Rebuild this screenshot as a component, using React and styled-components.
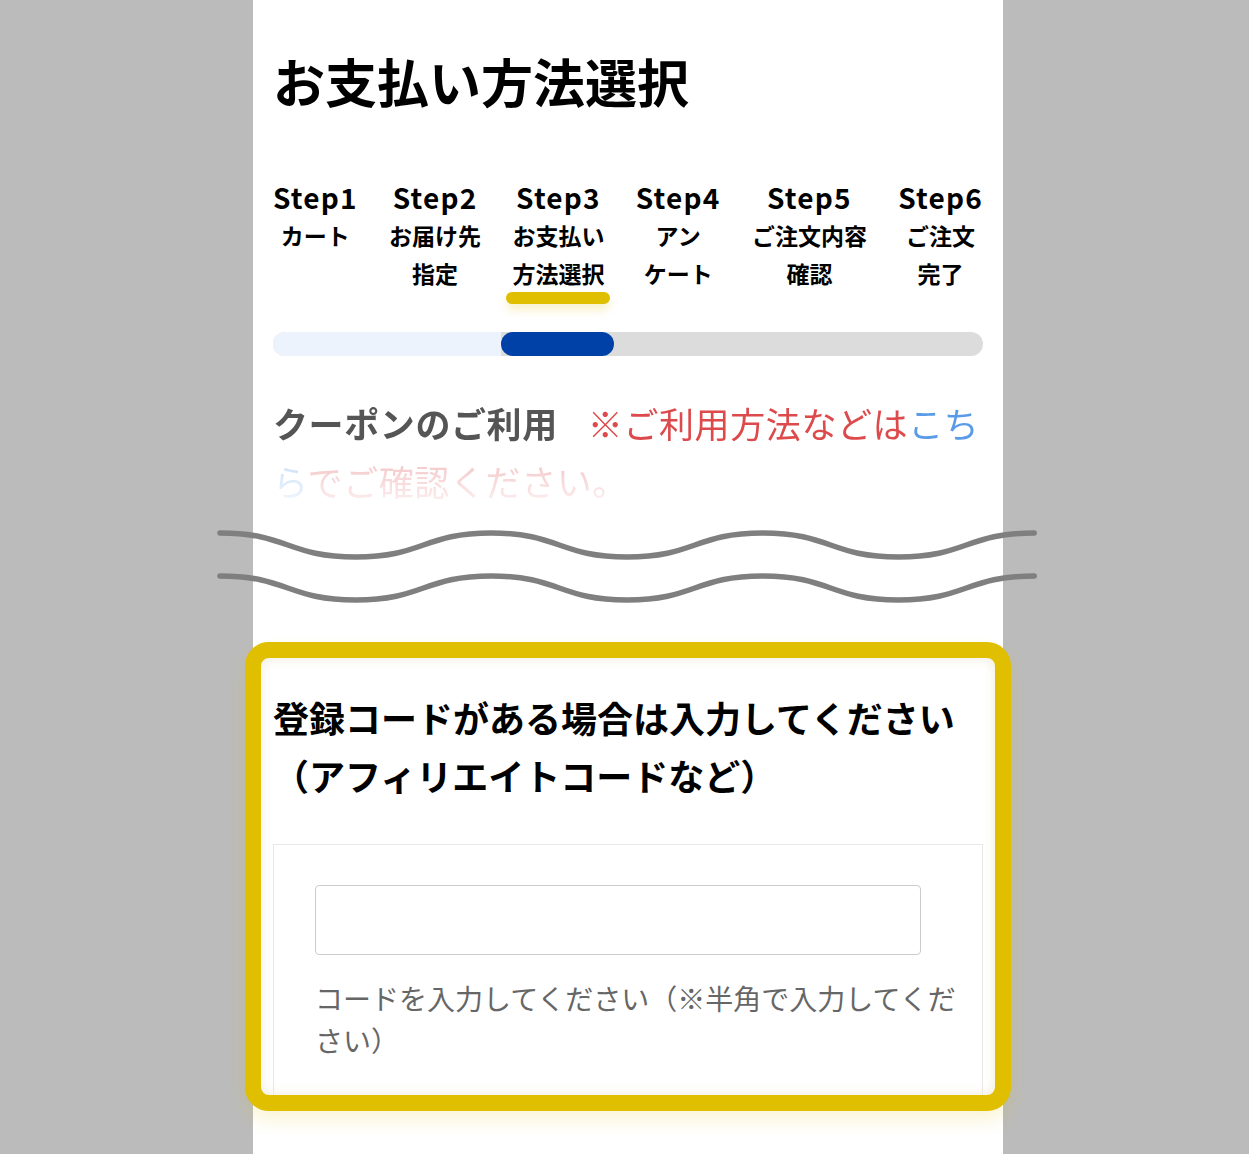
import React from 'react';
import styled, { createGlobalStyle } from 'styled-components';

const GlobalStyle = createGlobalStyle`
  html, body { margin: 0; padding: 0; background: #bbbbbb; }
  body { font-family: "Noto Sans CJK JP", "Noto Sans", sans-serif; color: #000; }
  * { box-sizing: border-box; }
`;

const Column = styled.main`
  width: 750px;
  min-height: 1154px;
  margin-left: 253px;
  background: #fff;
  padding: 45px 20px 42px;
`;

const Title = styled.h1`
  margin: 0;
  font-size: 52px;
  line-height: 72px;
  font-weight: 700;
`;

const Steps = styled.ol`
  list-style: none;
  margin: 61px 0 0;
  padding: 0;
  display: flex;
  justify-content: space-between;
`;

const Step = styled.li`
  display: flex;
  flex-direction: column;
  text-align: center;
`;

const StepLabel = styled.span`
  font-size: 28px;
  line-height: 38px;
  font-weight: 700;
  letter-spacing: 1.2px;
`;

const StepSub = styled.span`
  font-size: 23px;
  line-height: 38px;
  font-weight: 700;
  white-space: pre-line;
`;

const StepMark = styled.span`
  display: block;
  height: 12px;
  margin: 0 -6px;
  border-radius: 6px;
  background: #e0be00;
  box-shadow: 0 6px 10px rgba(224, 190, 0, 0.22);
`;

const Track = styled.div`
  margin-top: 28px;
  height: 24px;
  border-radius: 12px;
  background: #dcdcdc;
  display: flex;
  overflow: hidden;
`;

const TrackDone = styled.div`
  background: #edf3fd;
`;

const TrackCurrent = styled.div`
  background: #0041a8;
  border-radius: 12px;
`;

const Coupon = styled.p`
  margin: 38px 0 0;
  font-size: 35px;
  line-height: 58px;
  letter-spacing: 0.6px;
  -webkit-mask-image: linear-gradient(to bottom, #000 0, #000 50%, rgba(0,0,0,0.3) 60%, rgba(0,0,0,0.08) 95%);
  mask-image: linear-gradient(to bottom, #000 0, #000 50%, rgba(0,0,0,0.3) 60%, rgba(0,0,0,0.08) 95%);
`;

const CouponTitle = styled.span`
  color: #555;
  font-weight: 700;
  margin-right: 30px;
`;

const CouponNote = styled.span`
  color: #dd4a4c;
`;

const CouponLink = styled.a`
  color: #5a9be8;
  text-decoration: none;
`;

const Wave = styled.svg`
  display: block;
  margin: 15px 0 0 -56px;
`;

const Frame = styled.section`
  margin: 35px -28px 0;
  border: 16px solid #e0be00;
  border-radius: 24px;
  padding: 30px 12px 0;
  overflow: hidden;
  background: #fff;
  box-shadow: inset 0 0 12px rgba(170, 140, 40, 0.18), 0 10px 18px rgba(224, 190, 0, 0.16);
`;

const FrameHeading = styled.h2`
  margin: 0;
  font-size: 36px;
  line-height: 58px;
  font-weight: 700;
`;

const CodeBox = styled.div`
  margin-top: 40px;
  border: 1px solid #e8e8e8;
  border-bottom: none;
  padding: 40px 16px 34px 41px;
`;

const CodeInput = styled.input`
  display: block;
  width: 606px;
  height: 70px;
  border: 1px solid #cccccc;
  border-radius: 4px;
  background: #fff;
  font-size: 24px;
  padding: 0 16px;
`;

const Help = styled.p`
  margin: 22px 0 0;
  font-size: 28px;
  line-height: 42px;
  color: #666;
`;

const steps = [
  { label: 'Step1', sub: 'カート' },
  { label: 'Step2', sub: 'お届け先\n指定' },
  { label: 'Step3', sub: 'お支払い\n方法選択', current: true },
  { label: 'Step4', sub: 'アン\nケート' },
  { label: 'Step5', sub: 'ご注文内容\n確認' },
  { label: 'Step6', sub: 'ご注文\n完了' },
];

function wavePath(y0, amp) {
  const hp = 135.7;
  const x0 = 3;
  let d = `M${x0},${y0}`;
  for (let i = 0; i < 6; i++) {
    const xs = x0 + i * hp;
    const xe = xs + hp;
    const ys = i % 2 === 0 ? y0 : y0 + amp;
    const ye = i % 2 === 0 ? y0 + amp : y0;
    d += ` C${(xs + hp * 0.5).toFixed(1)},${ys} ${(xe - hp * 0.5).toFixed(1)},${ye} ${xe.toFixed(1)},${ye}`;
  }
  return d;
}

export default function App() {
  return (
    <>
      <GlobalStyle />
      <Column>
        <Title>お支払い方法選択</Title>
        <Steps>
          {steps.map((s) => (
            <Step key={s.label}>
              <StepLabel>{s.label}</StepLabel>
              <StepSub>{s.sub}</StepSub>
              {s.current && <StepMark />}
            </Step>
          ))}
        </Steps>
        <Track>
          <TrackDone style={{ width: 228 }} />
          <TrackCurrent style={{ width: 113 }} />
        </Track>
        <Coupon>
          <CouponTitle>クーポンのご利用</CouponTitle>
          <CouponNote>
            ※ご利用方法などは<CouponLink href="#">こちら</CouponLink>でご確認ください。
          </CouponNote>
        </Coupon>
        <Wave width="822" height="82" viewBox="0 0 822 82" aria-hidden="true">
          <path d={wavePath(8, 24)} fill="none" stroke="#7f7f7f" strokeWidth="5.5" strokeLinecap="round" />
          <path d={wavePath(51, 24)} fill="none" stroke="#7f7f7f" strokeWidth="5.5" strokeLinecap="round" />
        </Wave>
        <Frame>
          <FrameHeading>登録コードがある場合は入力してください（アフィリエイトコードなど）</FrameHeading>
          <CodeBox>
            <CodeInput type="text" />
            <Help>コードを入力してください（※半角で入力してください）</Help>
          </CodeBox>
        </Frame>
      </Column>
    </>
  );
}
